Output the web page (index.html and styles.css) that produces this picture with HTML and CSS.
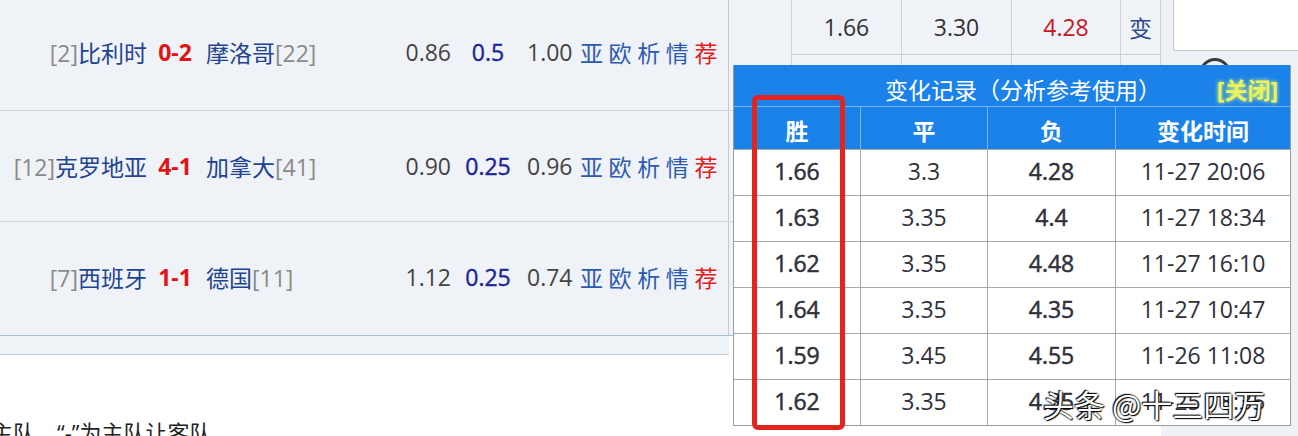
FILE: index.html
```html
<!DOCTYPE html>
<html lang="zh-CN">
<head>
    <meta charset="UTF-8">
    <meta name="viewport" content="width=device-width, initial-scale=1.0">
    <title>变化记录</title>
    <link rel="stylesheet" href="styles.css">
</head>
<body>
    <div class="page">
        <div class="main">
            <div class="row">
                <div class="match">
                    <span class="home"><i>[2]</i>比利时</span>
                    <span class="score">0-2</span>
                    <span class="away">摩洛哥<i>[22]</i></span>
                    <span class="o1">0.86</span>
                    <span class="hcap">0.5</span>
                    <span class="o2">1.00</span>
                    <span class="links"><b>亚</b><b>欧</b><b>析</b><b>情</b><b class="hot">荐</b></span>
                </div>
                <div class="odds">
                    <div class="o-blank"></div>
                    <div class="o-lines">
                        <div class="o-line"><span>1.66</span><span>3.30</span><span class="up">4.28</span><span class="chg">变</span></div>
                        <div class="o-line"><span></span><span></span><span></span><span class="chg"></span></div>
                    </div>
                </div>
            </div>
            <div class="row">
                <div class="match">
                    <span class="home"><i>[12]</i>克罗地亚</span>
                    <span class="score">4-1</span>
                    <span class="away">加拿大<i>[41]</i></span>
                    <span class="o1">0.90</span>
                    <span class="hcap">0.25</span>
                    <span class="o2">0.96</span>
                    <span class="links"><b>亚</b><b>欧</b><b>析</b><b>情</b><b class="hot">荐</b></span>
                </div>
                <div class="odds">
                    <div class="o-blank"></div>
                    <div class="o-lines">
                        <div class="o-line"><span></span><span></span><span></span><span class="chg"></span></div>
                        <div class="o-line"><span></span><span></span><span></span><span class="chg"></span></div>
                    </div>
                </div>
            </div>
            <div class="row">
                <div class="match">
                    <span class="home"><i>[7]</i>西班牙</span>
                    <span class="score">1-1</span>
                    <span class="away">德国<i>[11]</i></span>
                    <span class="o1">1.12</span>
                    <span class="hcap">0.25</span>
                    <span class="o2">0.74</span>
                    <span class="links"><b>亚</b><b>欧</b><b>析</b><b>情</b><b class="hot">荐</b></span>
                </div>
                <div class="odds">
                    <div class="o-blank"></div>
                    <div class="o-lines">
                        <div class="o-line"><span></span><span></span><span></span><span class="chg"></span></div>
                        <div class="o-line"><span></span><span></span><span></span><span class="chg"></span></div>
                    </div>
                </div>
            </div>
            <div class="band"></div>
            <p class="note">主队，“-”为主队让客队</p>
        </div>
        <div class="side">
            <div class="side-box"></div>
            <div class="side-ring"></div>
        </div>

        <div class="popup">
            <div class="pop-title">
                <span>变化记录（分析参考使用）</span>
                <span class="close">[关闭]</span>
            </div>
            <div class="pop-head">
                <span>胜</span><span>平</span><span>负</span><span>变化时间</span>
            </div>
            <div class="pop-grid">
                <span class="em">1.66</span><span>3.3</span><span class="em">4.28</span><span>11-27 20:06</span>
                <span class="em">1.63</span><span>3.35</span><span class="em">4.4</span><span>11-27 18:34</span>
                <span class="em">1.62</span><span>3.35</span><span class="em">4.48</span><span>11-27 16:10</span>
                <span class="em">1.64</span><span>3.35</span><span class="em">4.35</span><span>11-27 10:47</span>
                <span class="em">1.59</span><span>3.45</span><span class="em">4.55</span><span>11-26 11:08</span>
                <span class="em">1.62</span><span>3.35</span><span class="em">4.35</span><span>11-25 18:35</span>
            </div>
        </div>
        <div class="mark"></div>
        <div class="watermark">头条 @十三四万</div>
    </div>
</body>
</html>
```

FILE: styles.css
```css
* {
    box-sizing: border-box;
}
body {
    margin: 0;
    font-family: "Open Sans", "Noto Sans CJK SC", sans-serif;
    font-size: 23px;
    color: #333;
    background: #fff;
}
.page {
    position: relative;
    display: flex;
    width: 1298px;
    height: 436px;
    overflow: hidden;
}
.main {
    width: 1161px;
}
.row {
    display: flex;
    height: 111px;
    background: #eff2f6;
    border-bottom: 1px solid #d3d7dc;
}
.row:first-child .match {
    padding-bottom: 6px;
}
.row:nth-child(3) {
    height: 114px;
    border-bottom-color: #a9bdd2;
}
.row:nth-child(3) .match {
    padding-bottom: 4px;
}
.match {
    width: 729px;
    display: flex;
    align-items: center;
    border-right: 1px solid #c4c9cf;
    white-space: nowrap;
}
.match i {
    font-style: normal;
    color: #8a8a8a;
}
.home {
    width: 147px;
    text-align: right;
    color: #22438f;
}
.score {
    width: 56px;
    text-align: center;
    color: #e01414;
    font-weight: bold;
}
.away {
    width: 190px;
    padding-left: 3px;
    color: #22438f;
}
.o1 {
    width: 58px;
    text-align: right;
    color: #444;
}
.hcap {
    width: 74px;
    text-align: center;
    color: #1c2696;
    -webkit-text-stroke: 0.4px #1c2696;
}
.o2 {
    width: 52px;
    padding-left: 2px;
    color: #444;
}
.links {
    padding-left: 3px;
}
.links b {
    font-weight: normal;
    color: #2d5cae;
    margin-right: 5.6px;
}
.links b.hot {
    color: #e02020;
    margin-right: 0;
}
.odds {
    width: 432px;
    display: flex;
}
.o-blank {
    width: 63px;
    border-right: 1px solid #cdd1d6;
}
.o-lines {
    flex: 1;
    display: flex;
    flex-direction: column;
}
.o-line {
    display: flex;
    height: 55px;
    border-bottom: 1px solid #cdd1d6;
}
.o-line span {
    width: 110px;
    display: flex;
    align-items: center;
    justify-content: center;
    border-right: 1px solid #cdd1d6;
    color: #333;
}
.o-line span:nth-child(3) {
    width: 109px;
}
.o-line .up {
    color: #c8161e;
}
.o-line .chg {
    width: 40px;
    color: #2d4c8f;
}
.band {
    width: 729px;
    height: 19px;
    background: #eef3f8;
    border-bottom: 1px solid #c8d0d8;
}
.note {
    margin: 62px 0 0;
    font-size: 22px;
    line-height: 30px;
    text-indent: -9px;
    color: #222;
    white-space: nowrap;
}
.side {
    flex: 1;
    background: #eef1f5;
}
.side-box {
    margin-left: 12px;
    height: 51px;
    background: #fff;
    border-left: 1px solid #c4c8cc;
    border-bottom: 1px solid #c4c8cc;
}
.side-ring {
    width: 32px;
    height: 32px;
    margin: 7px 0 0 38px;
    border: 3px solid #3a3a3a;
    border-radius: 50%;
}

/* popup */
.popup {
    position: absolute;
    left: 733px;
    top: 65px;
    width: 558px;
    background: #fff;
    border: 1px solid #9c9c9c;
    border-top: 0;
}
.pop-title {
    height: 42px;
    display: flex;
    align-items: center;
    justify-content: space-between;
    padding: 6px 12px 0 151px;
    background: #1b82ea;
    border-bottom: 1px solid #79b3f0;
    color: #fff;
}
.close {
    color: #e9f35a;
    font-weight: bold;
    text-shadow: 0 0 4px #f1ff6a;
}
.pop-head,
.pop-grid {
    display: grid;
    grid-template-columns: 127px 127px 128px 1fr;
}
.pop-head {
    height: 42px;
    background: #1b82ea;
    color: #fff;
    font-weight: bold;
}
.pop-head span {
    display: flex;
    align-items: center;
    justify-content: center;
    padding-top: 4px;
    border-right: 1px solid #79b3f0;
}
.pop-head span:last-child,
.pop-grid span:nth-child(4n) {
    border-right: 0;
}
.pop-grid span {
    height: 46px;
    display: flex;
    align-items: center;
    justify-content: center;
    padding-bottom: 3px;
    border-right: 1px solid #a9a9a9;
    border-top: 1px solid #a9a9a9;
    color: #30303a;
}
.pop-grid .em {
    -webkit-text-stroke: 0.5px #30303a;
}
.mark {
    position: absolute;
    left: 752px;
    top: 95px;
    width: 93px;
    height: 335px;
    border: 5px solid #e3231d;
    border-radius: 6px;
}
.watermark {
    position: absolute;
    left: 1043px;
    top: 384px;
    font-family: "Noto Sans CJK SC", sans-serif;
    font-size: 31px;
    line-height: 40px;
    color: #fff;
    text-shadow: 0 0 2px #000, 1px 1px 1px #000, -1px -1px 1px #000;
    white-space: nowrap;
}
```
